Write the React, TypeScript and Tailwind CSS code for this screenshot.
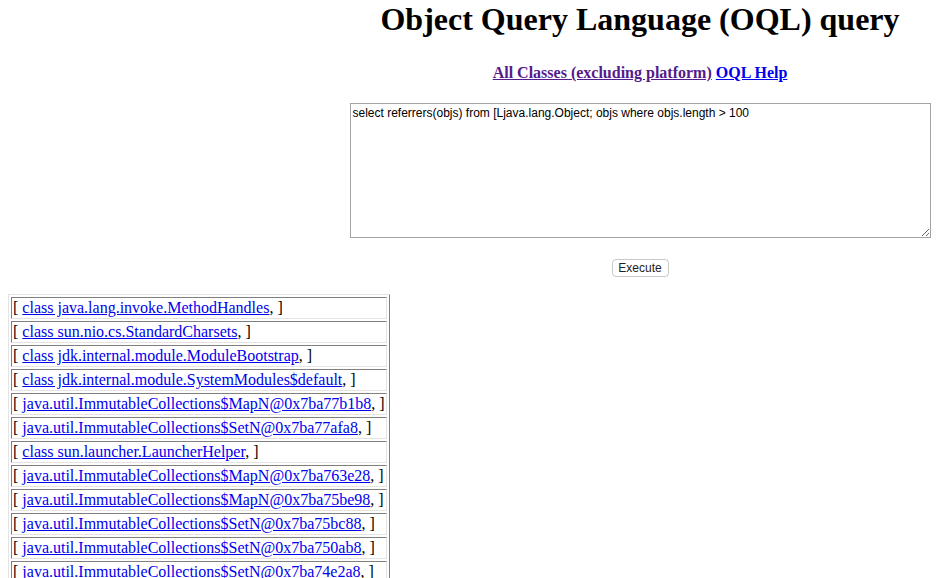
import React from "react";

const rows = [
  { text: "class java.lang.invoke.MethodHandles" },
  { text: "class sun.nio.cs.StandardCharsets" },
  { text: "class jdk.internal.module.ModuleBootstrap" },
  { text: "class jdk.internal.module.SystemModules$default" },
  { text: "java.util.ImmutableCollections$MapN@0x7ba77b1b8" },
  { text: "java.util.ImmutableCollections$SetN@0x7ba77afa8" },
  { text: "class sun.launcher.LauncherHelper" },
  { text: "java.util.ImmutableCollections$MapN@0x7ba763e28" },
  { text: "java.util.ImmutableCollections$MapN@0x7ba75be98" },
  { text: "java.util.ImmutableCollections$SetN@0x7ba75bc88" },
  { text: "java.util.ImmutableCollections$SetN@0x7ba750ab8" },
  { text: "java.util.ImmutableCollections$SetN@0x7ba74e2a8" },
  { text: "java.util.ImmutableCollections$MapN@0x7ba74d1f0" },
  { text: "class java.lang.module.ModuleDescriptor" },
];

const App = () => {
  return (
    <div className="w-[950px] h-[578px] overflow-hidden bg-white">
      <div className="w-[1280px] px-2 text-black font-['Liberation_Serif',serif] text-[16px]">
        <h1 className="text-center text-[32px] font-bold leading-[37px] mt-[1px]">
          Object Query Language (OQL) query
        </h1>

        <p className="text-center font-bold leading-[18px] mt-[26px]">
          <a href="#" className="underline text-[#551a8b]">
            All Classes (excluding platform)
          </a>{" "}
          <a href="#" className="underline text-[#0000ee]">
            OQL Help
          </a>
        </p>

        <form onSubmit={(e) => e.preventDefault()}>
          <div className="flex justify-center mt-[21px]">
            <textarea
              name="query"
              defaultValue="select referrers(objs) from [Ljava.lang.Object; objs where objs.length > 100"
              className="w-[581px] h-[135px] border border-[#a3a3a3] bg-white px-[2px] pt-[2px] text-[12px] leading-[15px] font-['Liberation_Sans',Arial,sans-serif] text-black outline-none"
            />
          </div>
          <div className="flex justify-center mt-[21px]">
            <button
              type="submit"
              className="w-[57px] h-[18px] rounded-[4px] border border-[#c8c8c8] bg-white text-[12px] leading-[16px] font-['Liberation_Sans',Arial,sans-serif] text-[#222]"
            >
              Execute
            </button>
          </div>
        </form>

        <table className="mt-[17px] border-separate border-spacing-[2px] border border-t-[#e3e3e3] border-l-[#e3e3e3] border-r-[#7f7f7f] border-b-[#7f7f7f]">
          <tbody>
            {rows.map((r, i) => (
              <tr key={i}>
                <td className="p-[1px] leading-[18px] whitespace-nowrap border border-t-[#7f7f7f] border-l-[#7f7f7f] border-r-[#e3e3e3] border-b-[#e3e3e3]">
                  [ <a href="#" className="underline text-[#0000ee]">{r.text}</a>, ]
                </td>
              </tr>
            ))}
          </tbody>
        </table>
      </div>
    </div>
  );
};

export default App;
